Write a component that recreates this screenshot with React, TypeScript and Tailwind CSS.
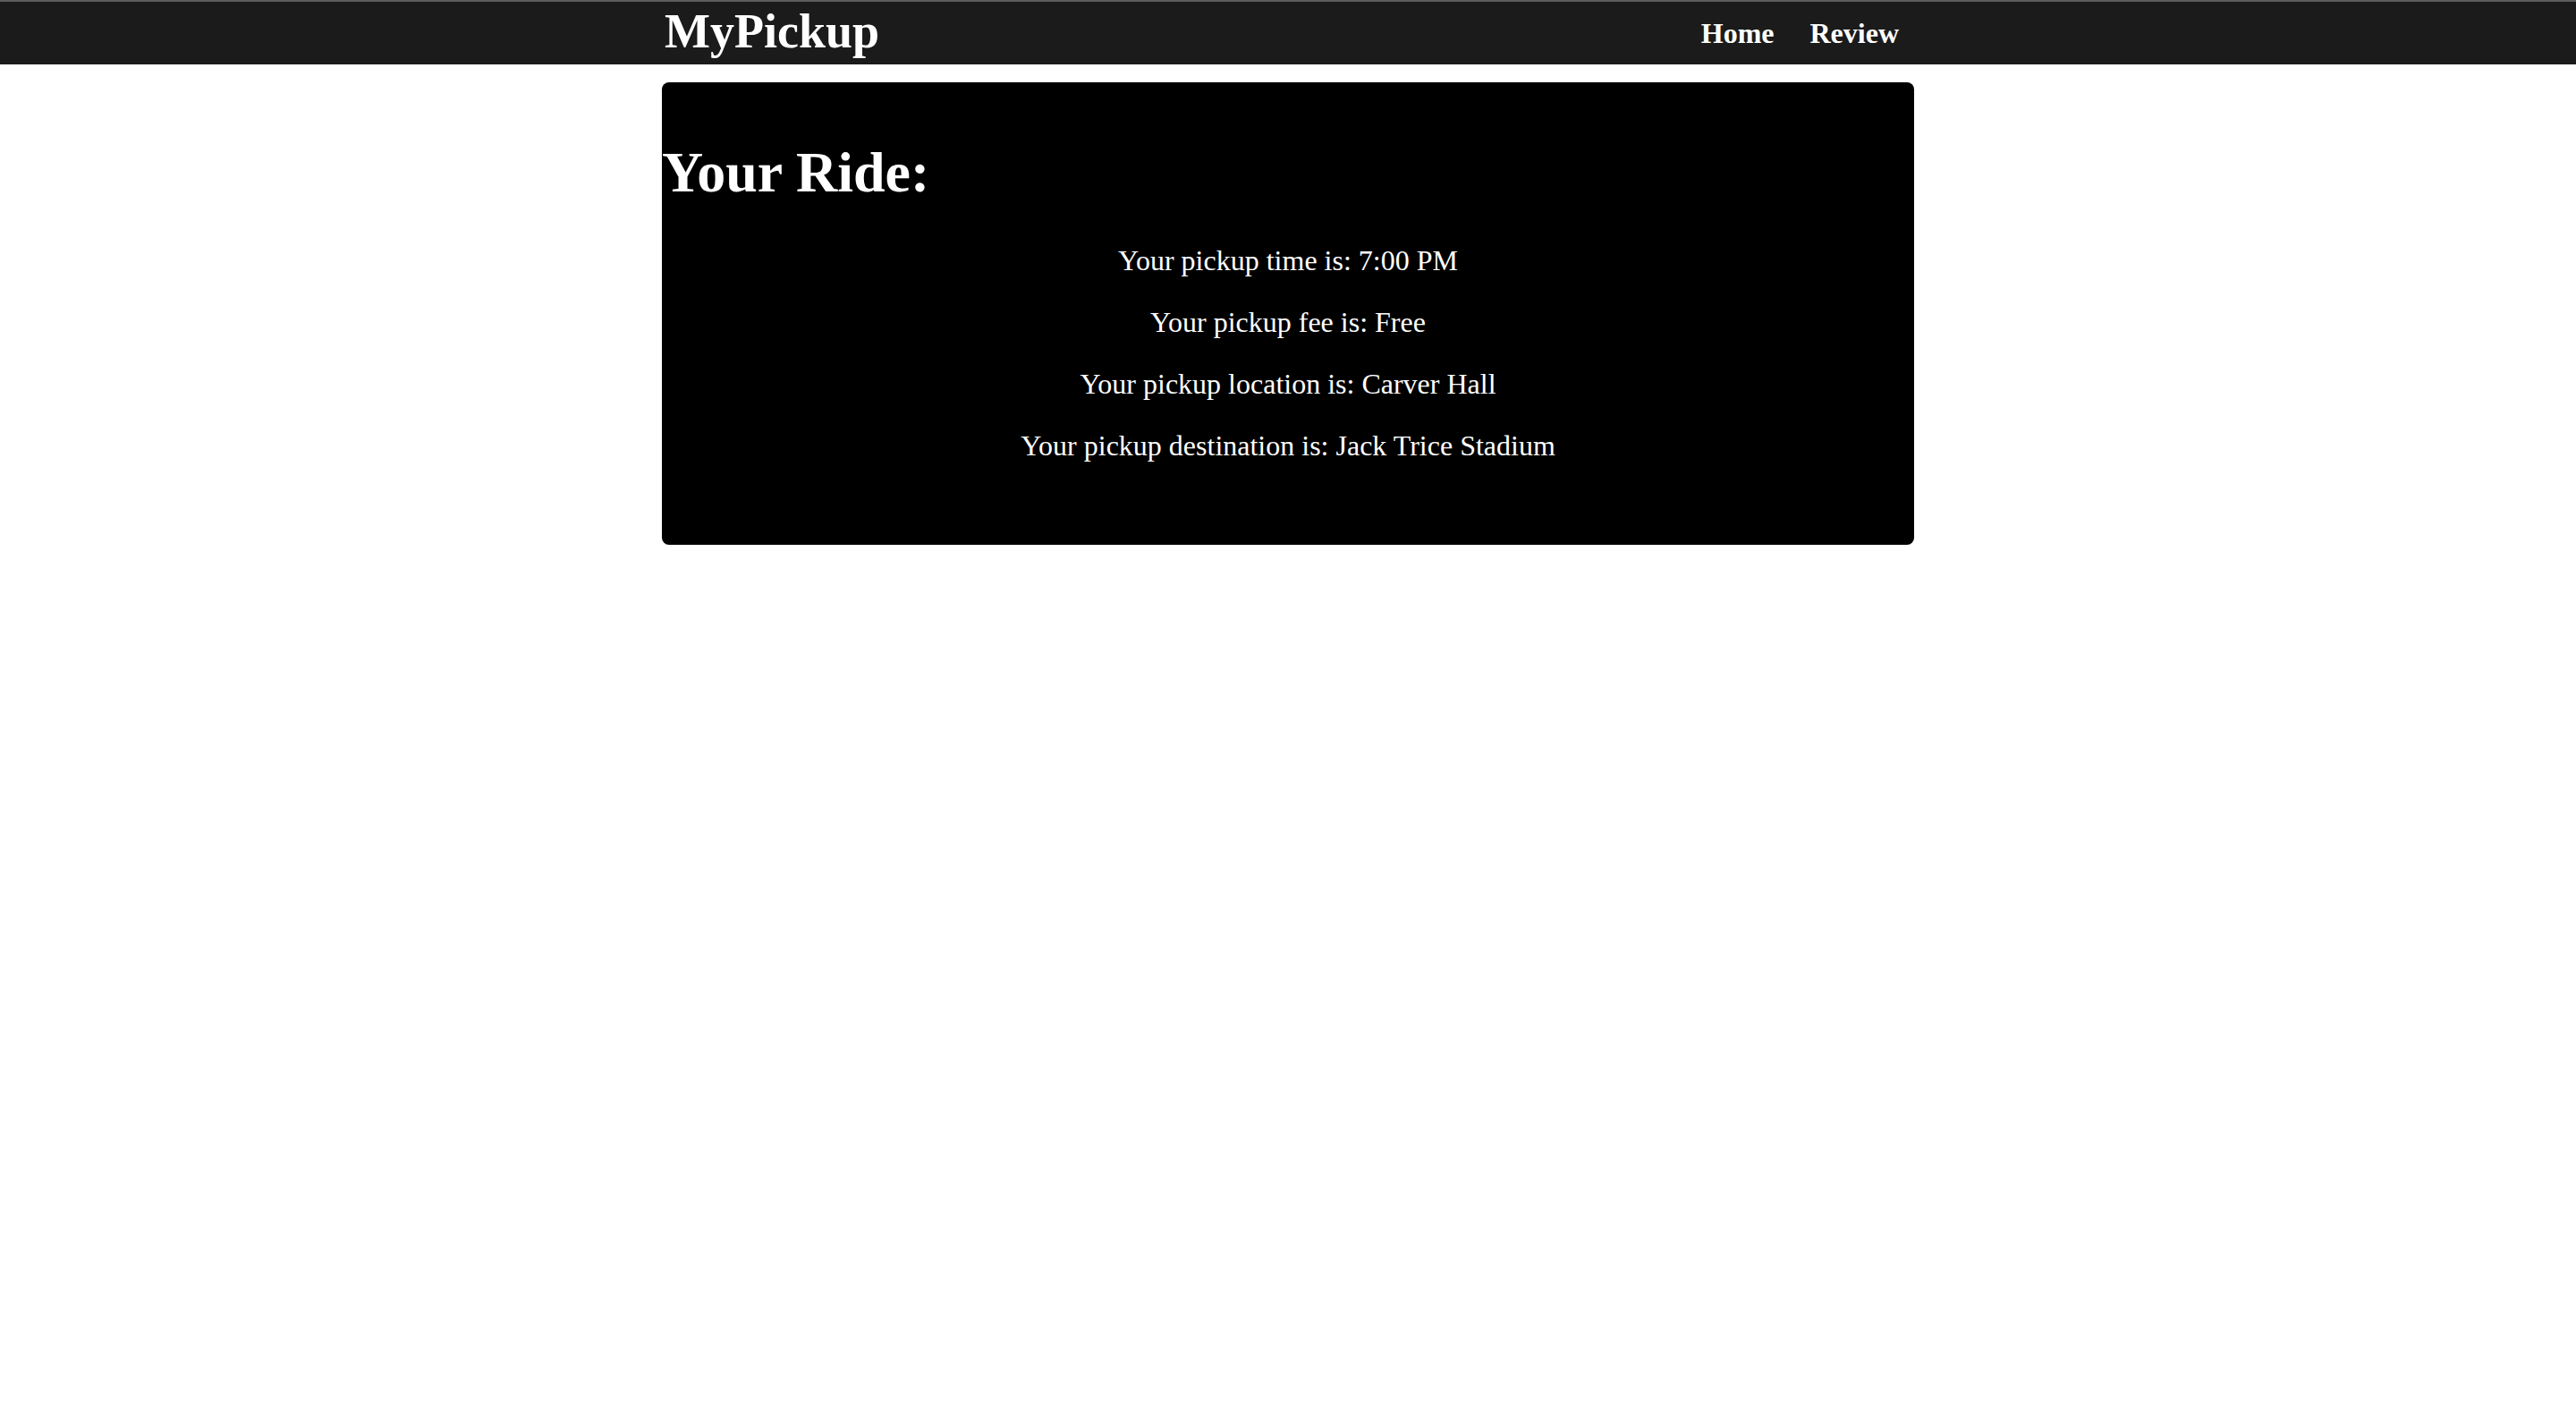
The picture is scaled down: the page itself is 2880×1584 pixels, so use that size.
export default function App() {
  const details = [
    "Your pickup time is: 7:00 PM",
    "Your pickup fee is: Free",
    "Your pickup location is: Carver Hall",
    "Your pickup destination is: Jack Trice Stadium",
  ]

  return (
    <div className="min-h-screen bg-white text-white font-['Liberation_Serif','Times_New_Roman',serif]">
      {/* Top bar */}
      <header className="h-[72px] bg-[#1b1b1b] border-t-2 border-[#5c5c5c]">
        <div className="w-[1400px] mx-auto h-full flex items-center justify-between">
          <h1 className="self-start mt-[2px] pl-[3px] text-[54px] leading-[62px] font-bold">MyPickup</h1>
          <nav className="flex items-center gap-[40px] pr-[17px] text-[32px] font-bold">
            <a href="#">Home</a>
            <a href="#">Review</a>
          </nav>
        </div>
      </header>

      {/* Ride card */}
      <main className="pt-[20px]">
        <div className="w-[1400px] mx-auto bg-black rounded-lg pt-[64px] pb-[92px]">
          <h2 className="text-[64px] leading-[73px] font-bold">Your Ride:</h2>
          <div className="mt-[44px] flex flex-col gap-[32px] text-center">
            {details.map((line) => (
              <p key={line} className="text-[32px] leading-[37px]">
                {line}
              </p>
            ))}
          </div>
        </div>
      </main>
    </div>
  )
}
